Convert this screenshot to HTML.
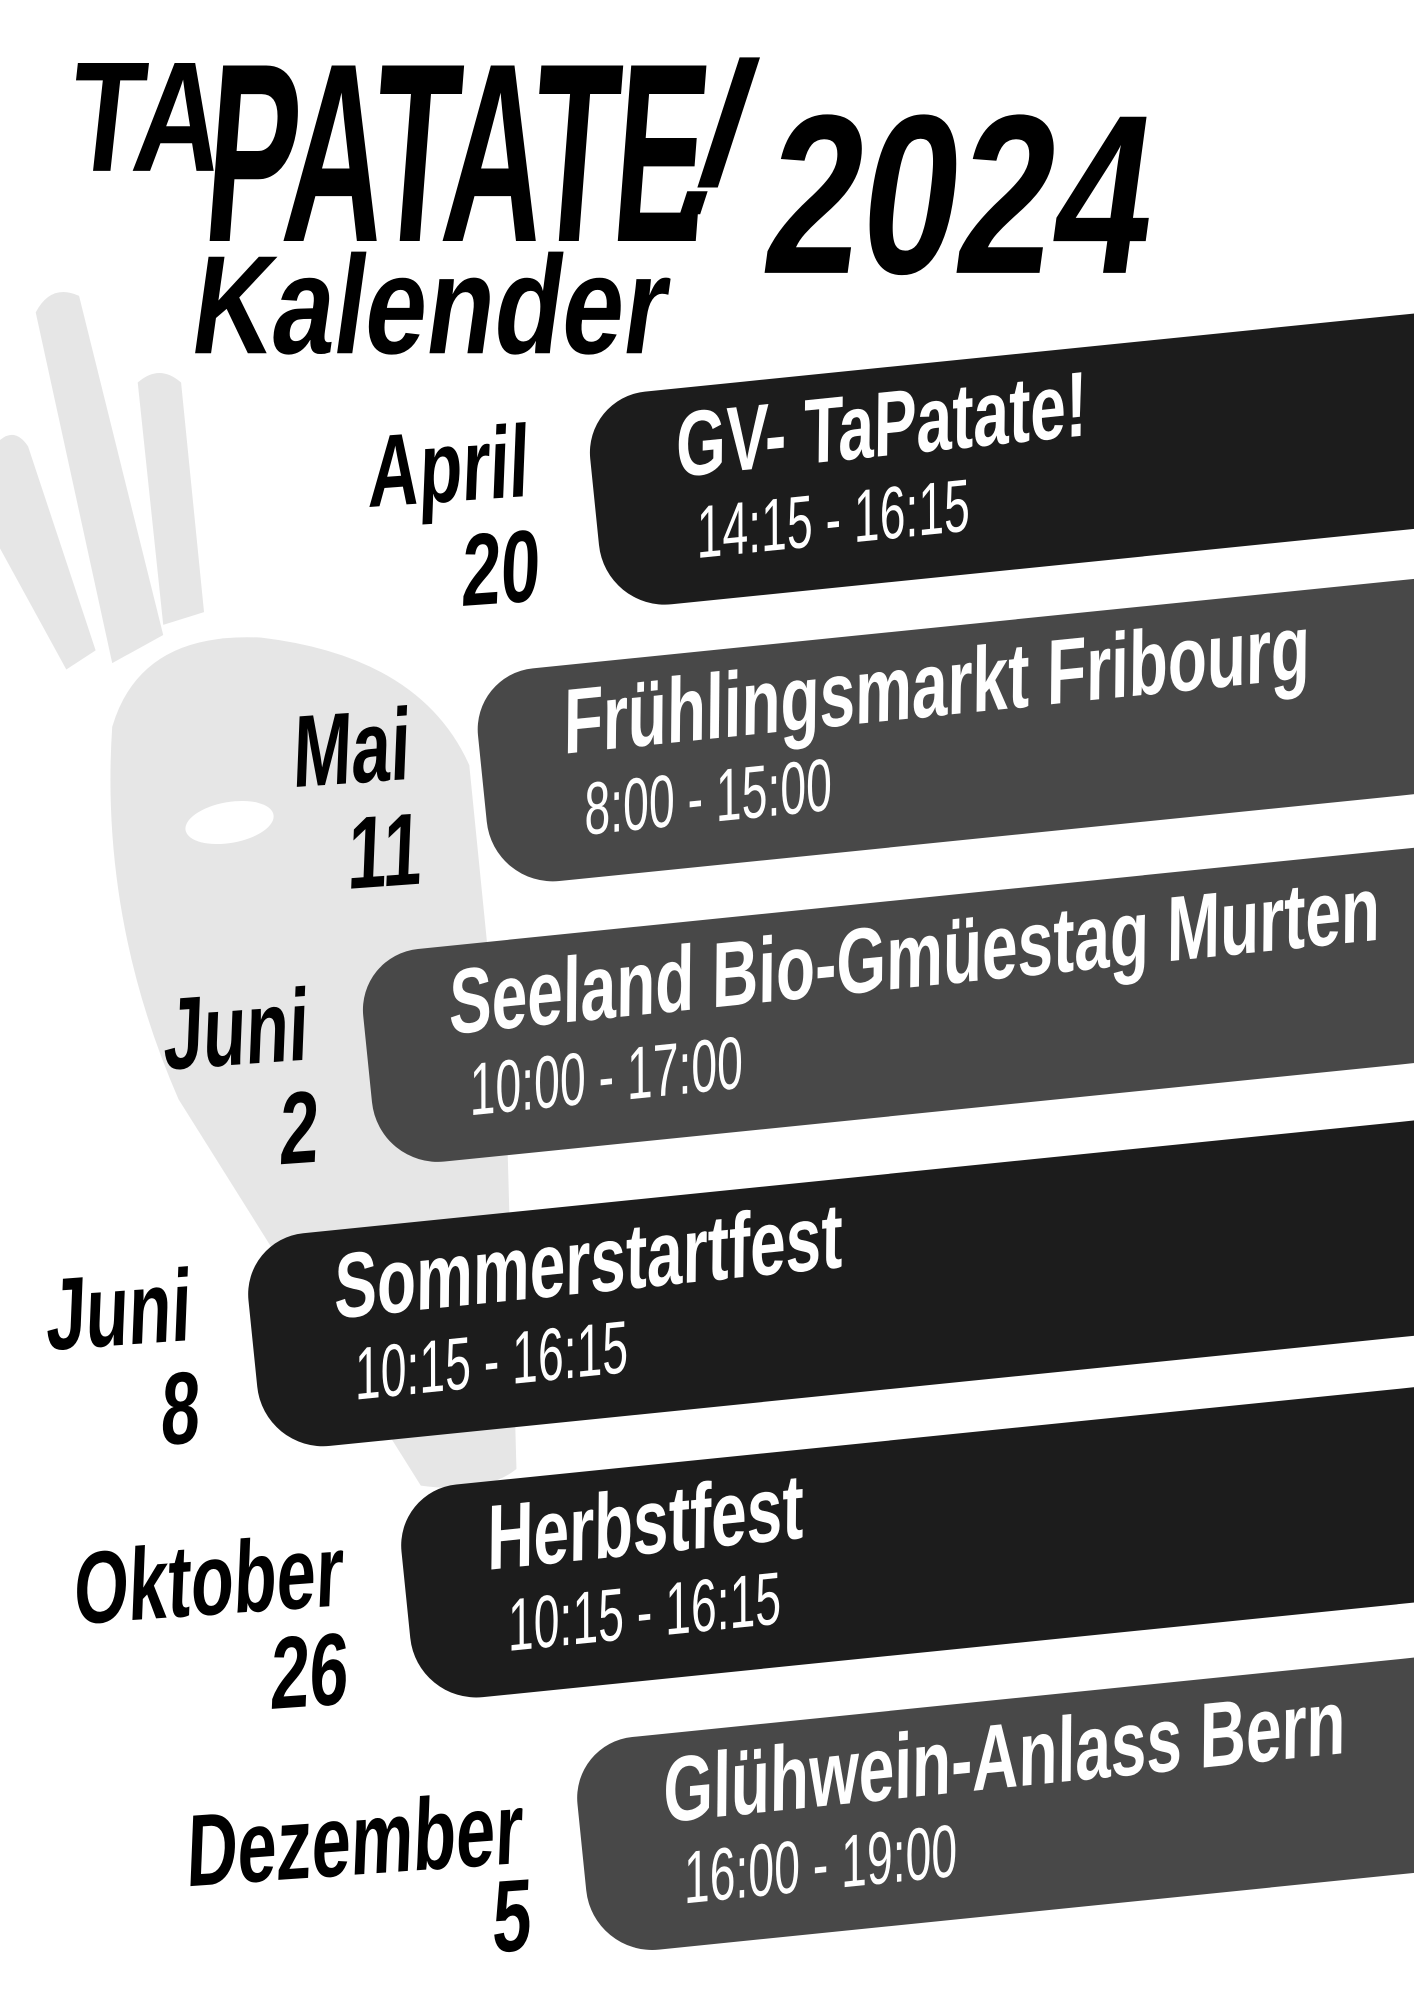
<!DOCTYPE html>
<html><head><meta charset="utf-8">
<style>
html,body{margin:0;padding:0;background:#fff;overflow:hidden;}
body{width:1414px;height:2000px;position:relative;}
#w{position:absolute;left:0;top:0;width:1109px;height:1568px;transform:scale(1.2752);transform-origin:0 0;overflow:hidden;}
.f{font-family:"Liberation Sans Narrow","Liberation Sans",sans-serif;font-weight:bold;line-height:1;white-space:nowrap;position:absolute;}
.bar{position:absolute;width:1000px;height:168px;transform:rotate(-5.8deg);transform-origin:0 0;border-radius:48px 0 0 52px;}
.dk{background:#1c1c1c}.gr{background:#484848}
.t{position:absolute;left:72px;top:9px;font-size:72px;color:#fff;transform:scaleX(.70) skewX(-9deg);transform-origin:0 0;}
.tm{position:absolute;left:80px;top:86px;font-size:58px;color:#fff;font-weight:normal;transform:scaleX(.63) skewX(-9deg);transform-origin:0 0;}
.d{font-size:80px;color:#000;text-align:right;transform:rotate(-4deg) scaleX(.69) skewX(-9deg);transform-origin:100% 100%;}
</style></head><body><div id="w">
<svg width="1109" height="1568" style="position:absolute;left:0;top:0">
<g fill="#e6e6e6">
<path d="M28,245 Q40,222 62,232 L128,498 L88,520 Z"/>
<path d="M0,345 Q12,335 22,350 L75,510 L52,525 L0,430 Z"/>
<path d="M108,300 Q125,285 142,300 L160,480 L128,490 Z"/>
<path d="M88,570 Q110,495 205,500 Q330,515 368,600 L398,900 L405,1152 Q380,1172 330,1165 L140,862 Q78,720 88,570 Z"/>
</g>
<ellipse cx="180" cy="645" rx="35" ry="16" fill="#fff" transform="rotate(-10 180 645)"/>
</svg>
<div class="f" style="left:62px;top:31px;font-size:123px;transform:scaleX(.77) skewX(-8deg);transform-origin:0 0;">TA</div>
<div class="f" style="left:170px;top:21px;font-size:200px;transform:scaleX(.545) skewX(-8deg);transform-origin:0 0;letter-spacing:-4px">PATATE</div>
<div style="position:absolute;top:45px;width:16px;height:102px;background:#000;transform:skewX(-18deg);transform-origin:0 0;left:580px"></div>
<div style="position:absolute;left:536px;top:150px;width:16px;height:18px;background:#000;transform:skewX(-18deg)"></div>
<div class="f" style="left:160px;top:185px;font-size:110px;transform:scaleX(.79) skewX(-10deg);transform-origin:0 0;">Kalender</div>
<div class="f" style="left:615px;top:64px;font-size:178px;transform:scaleX(.76) skewX(-10deg);transform-origin:0 0;">2024</div>

<div class="bar dk" style="left:458px;top:312px"><div class="f t">GV- TaPatate!</div><div class="f tm">14:15 - 16:15</div></div>
<div class="bar gr" style="left:370px;top:529px"><div class="f t">Frühlingsmarkt Fribourg</div><div class="f tm">8:00 - 15:00</div></div>
<div class="bar gr" style="left:280px;top:749px"><div class="f t">Seeland Bio-Gmüestag Murten</div><div class="f tm">10:00 - 17:00</div></div>
<div class="bar dk" style="left:190px;top:972px"><div class="f t">Sommerstartfest</div><div class="f tm">10:15 - 16:15</div></div>
<div class="bar dk" style="left:310px;top:1169px"><div class="f t">Herbstfest</div><div class="f tm">10:15 - 16:15</div></div>
<div class="bar gr" style="left:448px;top:1367px"><div class="f t">Glühwein-Anlass Bern</div><div class="f tm">16:00 - 19:00</div></div>

<div class="f d" style="right:696px;top:322px">April</div>
<div class="f d" style="right:687px;top:404px">20</div>
<div class="f d" style="right:789px;top:544px">Mai</div>
<div class="f d" style="right:779px;top:626px">11</div>
<div class="f d" style="right:869px;top:764px">Juni</div>
<div class="f d" style="right:861px;top:844px">2</div>
<div class="f d" style="right:961px;top:984px">Juni</div>
<div class="f d" style="right:954px;top:1064px">8</div>
<div class="f d" style="right:841px;top:1192px">Oktober</div>
<div class="f d" style="right:837px;top:1269px">26</div>
<div class="f d" style="right:701px;top:1394px">Dezember</div>
<div class="f d" style="right:694px;top:1462px">5</div>
</div></body></html>
